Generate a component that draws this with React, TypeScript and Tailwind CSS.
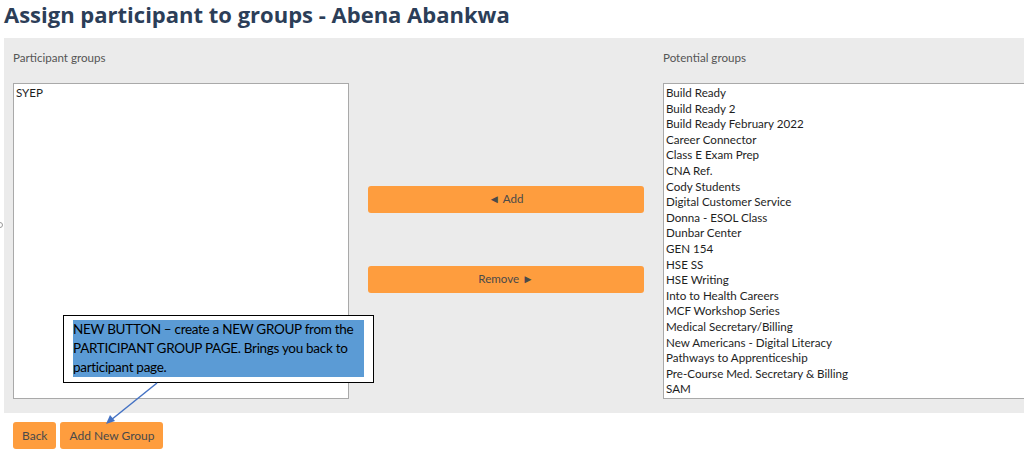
import * as React from "react"

const PARTICIPANT_GROUPS = ["SYEP"]

const POTENTIAL_GROUPS = [
  "Build Ready",
  "Build Ready 2",
  "Build Ready February 2022",
  "Career Connector",
  "Class E Exam Prep",
  "CNA Ref.",
  "Cody Students",
  "Digital Customer Service",
  "Donna - ESOL Class",
  "Dunbar Center",
  "GEN 154",
  "HSE SS",
  "HSE Writing",
  "Into to Health Careers",
  "MCF Workshop Series",
  "Medical Secretary/Billing",
  "New Americans - Digital Literacy",
  "Pathways to Apprenticeship",
  "Pre-Course Med. Secretary & Billing",
  "SAM",
]

const uiFont = "font-['Lato','Open_Sans',sans-serif]"

function GroupList({ items }: { items: string[] }) {
  return (
    <div className="h-[316px] overflow-hidden border border-[#a9a9a9] bg-white px-[2px] py-[1px]">
      {items.map((g) => (
        <div key={g} className="text-[11.6px] leading-[15.6px] text-[#1e1e1e]">
          {g}
        </div>
      ))}
    </div>
  )
}

export default function App() {
  return (
    <div className={`relative h-[454px] w-[1024px] overflow-hidden bg-white ${uiFont}`}>
      {/* Page title */}
      <h1 className="pl-[4px] pt-[0px] font-['Open_Sans',sans-serif] text-[22px] font-bold leading-[29px] text-[#2c3e58]">
        Assign participant to groups - Abena Abankwa
      </h1>

      {/* Grey assignment panel */}
      <div className="ml-[4px] mt-[9px] flex h-[375px] gap-[19px] bg-[#ebebeb] pl-[9px] pt-[11px]">
        <div className="w-[336px] shrink-0">
          <div className="mb-[17px] h-[17px] text-[11.6px] leading-[17px] text-[#555]">Participant groups</div>
          <GroupList items={PARTICIPANT_GROUPS} />
        </div>

        <div className="flex w-[276px] shrink-0 flex-col justify-center gap-[53px] pt-[16px]">
          <button className="h-[27px] rounded-[3px] bg-[#fe9d3e] text-[11.6px] text-[#4a4a4a]">
            ◄ Add
          </button>
          <button className="h-[27px] rounded-[3px] bg-[#fe9d3e] text-[11.6px] text-[#4a4a4a]">
            Remove ►
          </button>
        </div>

        <div className="w-[400px] shrink-0">
          <div className="mb-[17px] h-[17px] text-[11.6px] leading-[17px] text-[#555]">Potential groups</div>
          <GroupList items={POTENTIAL_GROUPS} />
        </div>
      </div>

      {/* Footer buttons */}
      <div className="ml-[13px] mt-[9px] flex gap-[4px]">
        <button className="h-[27px] rounded-[3px] bg-[#fe9d3e] px-[9px] text-[12px] text-[#4a4a4a]">Back</button>
        <button className="h-[27px] rounded-[3px] bg-[#fe9d3e] px-[9px] text-[12px] text-[#4a4a4a]">Add New Group</button>
      </div>

      {/* sliver of a cut-off glyph at the left edge */}
      <span className="absolute left-[-3px] top-[222px] h-[6px] w-[6px] rounded-full border border-[#999]" />

      {/* Annotation callout */}
      <div className="absolute left-[63px] top-[315px] h-[68px] w-[311px] border border-black bg-white px-[9px] py-[4px]">
        <div className="whitespace-nowrap bg-[#5b9bd5] font-['Lato',sans-serif] text-[13.5px] leading-[19px] tracking-[-0.3px] text-black">
          NEW BUTTON – create a NEW GROUP from the
          <br />
          PARTICIPANT GROUP PAGE. Brings you back to
          <br />
          participant page.
        </div>
      </div>

      <svg className="absolute left-0 top-0" width="1024" height="454" viewBox="0 0 1024 454" fill="none">
        <line x1="157" y1="383" x2="111" y2="420" stroke="#4472c4" strokeWidth="1.5" />
        <polygon points="106,424 110,415 115,421" fill="#4472c4" />
      </svg>
    </div>
  )
}
